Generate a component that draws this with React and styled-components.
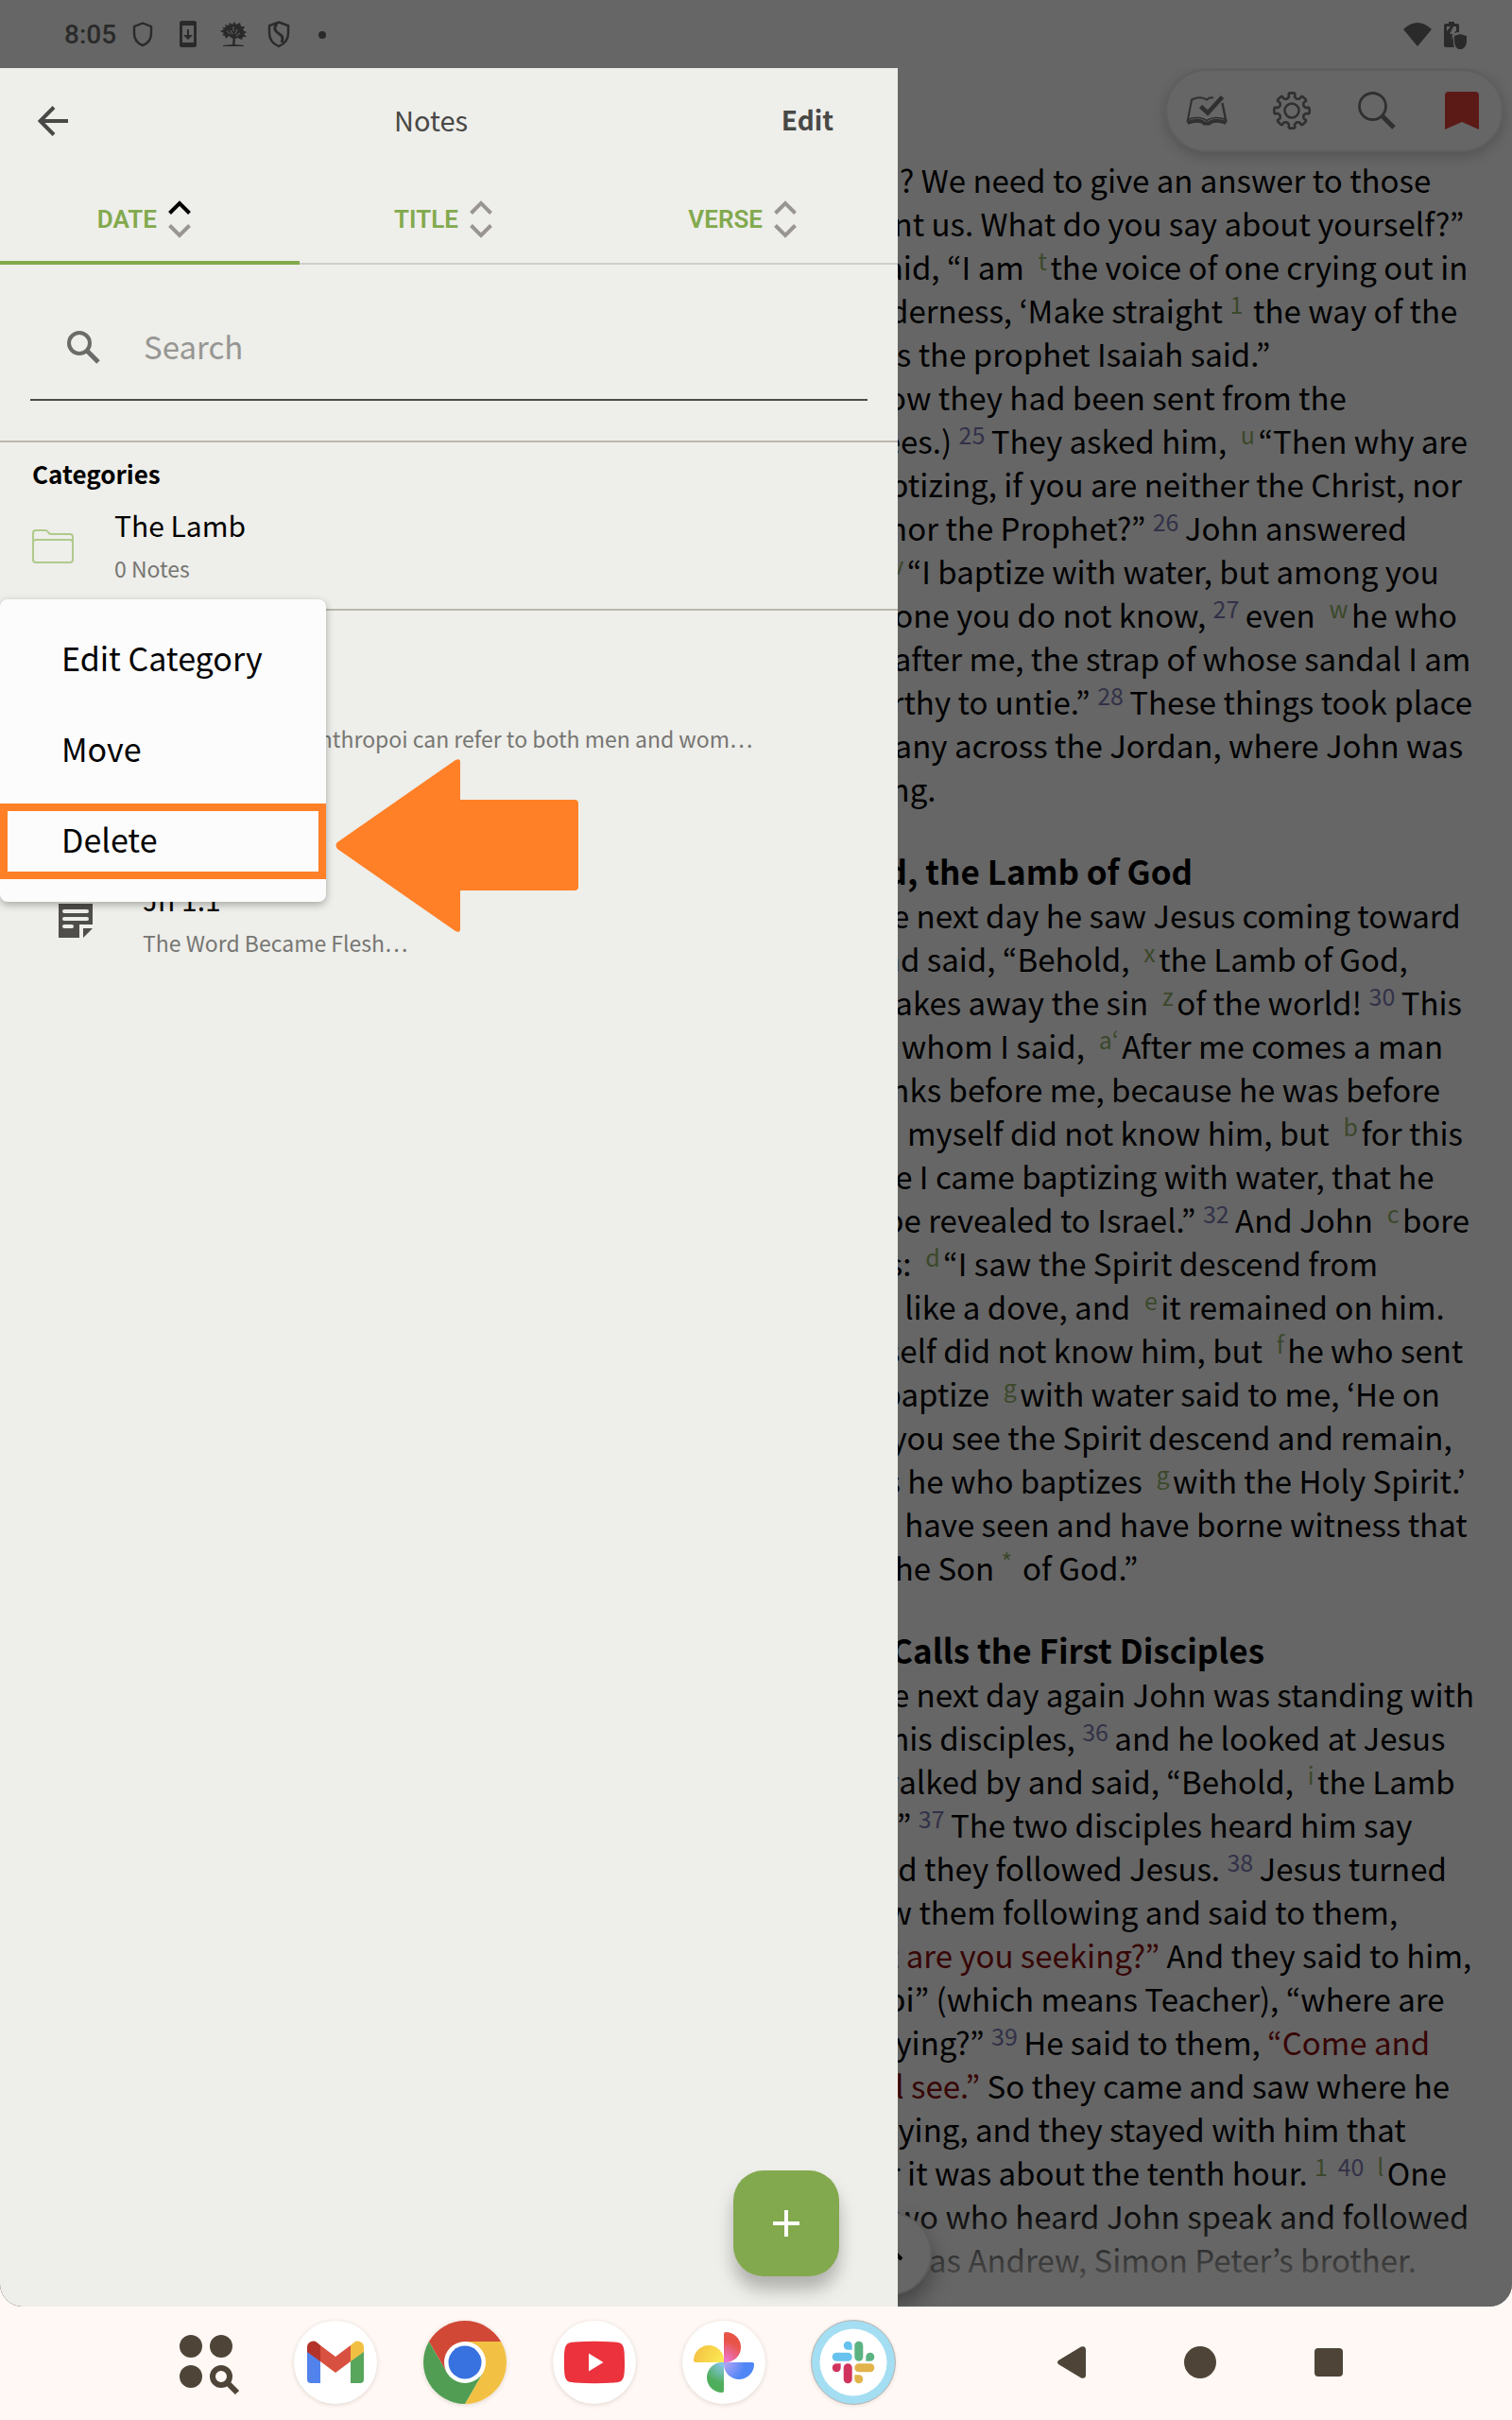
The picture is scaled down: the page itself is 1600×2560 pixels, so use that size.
import React from 'react'
import styled, { createGlobalStyle, css } from 'styled-components'

const GlobalStyle = createGlobalStyle`
*{
  box-sizing:border-box;
}
body{
  margin:0;
  background-color:#fff8f4;
  font-family:"Noto Sans CJK KR","Noto Sans",sans-serif;
}
button,input{
  font-family:inherit;
  border:none;
  background:none;
  padding:0;
  margin:0;
}
button{
  cursor:pointer;
}
h1,h2,p,ul{
  margin:0;
  padding:0;
}
ul{
  list-style:none;
}
svg{
  display:block;
}
`

const Page = styled.div`
  min-height:100vh;
  display:flex;
  flex-direction:column;
`

/* status bar */
const StatusBar = styled.header`
  height:72px;
  padding:0 46px 0 68px;
  display:flex;
  align-items:center;
  justify-content:space-between;
  background-color:#666;
  color:#2a2a2a;
`
const StatusGroup = styled.div`
  display:flex;
  align-items:center;
  gap:12px;
`
const StatusIcons = styled.div`
  display:flex;
  align-items:center;
  gap:${props => props.$gap}px;
`
const Time = styled.span`
  font-family:Roboto,sans-serif;
  font-size:28px;
  font-weight:500;
`

/* main area */
const Main = styled.main`
  flex:1;
  position:relative;
  display:flex;
  border-radius:0 0 24px 24px;
  overflow:hidden;
  background-color:#666;
`

/* reader */
const Reader = styled.section`
  flex:1;
  display:flex;
  flex-direction:column;
  color:#000;
`
const Toolbar = styled.nav`
  align-self:flex-end;
  margin:1px 9px 6px 0;
  height:88px;
  padding:0 20px;
  display:flex;
  align-items:center;
  gap:46px;
  border:2px solid #5e5e5e;
  border-radius:44px;
  box-shadow:0 4px 14px rgba(0,0,0,0.2);
`
const ToolButton = styled.button`
  width:44px;
  height:44px;
  display:flex;
  align-items:center;
  justify-content:center;
`
const Spread = styled.div`
  display:grid;
  grid-template-columns:1fr 1fr;
  column-gap:92px;
  padding:0 40px;
`
const Column = styled.article`
  grid-column:2;
  font-size:33px;
  line-height:46px;
  white-space:nowrap;
`
const Heading = styled.h2`
  margin-top:40px;
  font-size:35px;
  line-height:48px;
  font-weight:700;
`
const Line = styled.span`
  display:block;
  padding-left:${props => (props.$indent ? '32px' : '0')};
`
const Mark = styled.sup`
  font-size:25px;
  line-height:0;
  vertical-align:10px;
  color:#3b482a;
  margin-right:-4px;
  ${props => props.$verse && css`
    color:#323148;
    margin-right:-1px;
  `}
`
const Red = styled.span`
  color:#370505;
`
const Fade = styled.div`
  position:absolute;
  left:0;
  right:0;
  bottom:0;
  height:110px;
  background:linear-gradient(rgba(102,102,102,0),#666);
`
const NextButton = styled.button`
  position:absolute;
  right:614px;
  bottom:12px;
  width:88px;
  height:88px;
  display:flex;
  align-items:center;
  justify-content:center;
  border:2px solid #5e5e5e;
  border-radius:50%;
  background-color:#666;
  box-shadow:0 12px 24px rgba(0,0,0,0.35);
`

/* drawer */
const Overlay = styled.div`
  position:absolute;
  inset:0;
  display:flex;
  pointer-events:none;
`
const Drawer = styled.aside`
  flex:19;
  min-width:0;
  display:flex;
  flex-direction:column;
  background-color:#eeeeea;
  pointer-events:auto;
`
const Rest = styled.div`
  flex:13;
`
const DrawerHeader = styled.div`
  height:112px;
  display:grid;
  grid-template-columns:112px 1fr 150px;
  align-items:center;
  color:#484846;
`
const BackButton = styled.button`
  padding-left:40px;
  color:inherit;
`
const Title = styled.h1`
  padding-bottom:4px;
  text-align:center;
  font-size:29px;
  font-weight:400;
`
const EditButton = styled.button`
  padding:0 68px 4px 0;
  text-align:right;
  font-size:28px;
  font-weight:700;
  color:inherit;
`
const Tabs = styled.div`
  height:96px;
  display:grid;
  grid-template-columns:repeat(3,1fr);
`
const Tab = styled.button`
  padding-right:4px;
  display:flex;
  align-items:center;
  justify-content:center;
  gap:4px;
  font-family:Roboto,sans-serif;
  font-size:26px;
  font-weight:600;
  color:#82a94d;
  box-shadow:inset 0 ${props => (props.$active ? '-4px 0 #82a94d' : '-2px 0 #cfcfcb')};
`
const SearchBox = styled.label`
  height:144px;
  margin:0 32px 42px;
  padding:32px 38px 0;
  display:flex;
  align-items:center;
  gap:46px;
  border-bottom:2px solid #4a4a46;
  color:#6b6b69;
`
const SearchInput = styled.input`
  flex:1;
  min-width:0;
  height:64px;
  padding-bottom:3px;
  font-size:33px;
  color:#484846;
  outline:none;
  &::placeholder{
    color:#969693;
    opacity:1;
  }
`
const Categories = styled.section`
  position:relative;
  height:180px;
  padding:13px 34px 0;
  border-top:2px solid #b9b7ad;
  border-bottom:2px solid #b9b7ad;
`
const SectionTitle = styled.h2`
  font-size:26px;
  line-height:40px;
  font-weight:700;
`
const CategoryRow = styled.div`
  margin-top:11px;
  display:flex;
  align-items:center;
  gap:43px;
`
const RowText = styled.div`
  min-width:0;
  white-space:nowrap;
`
const RowTitle = styled.p`
  font-size:30px;
  line-height:46px;
  color:#000;
`
const RowSub = styled.p`
  font-size:23px;
  line-height:46px;
  color:#767673;
`
const NoteList = styled.ul`
  padding:58px 62px 0;
`
const NoteRow = styled.li`
  height:108px;
  display:flex;
  align-items:center;
  gap:53px;
`
const NoteText = styled(RowText)`
  height:92px;
  display:flex;
  flex-direction:column;
  justify-content:flex-end;
`
const Menu = styled.ul`
  position:absolute;
  left:0;
  top:calc(100% - 10px);
  min-width:345px;
  padding:16px 0;
  border-radius:8px;
  background-color:#fcfcfc;
  box-shadow:0 3px 8px rgba(0,0,0,0.3);
`
const MenuItem = styled.li`
  position:relative;
  padding:8px 0;
`
const MenuButton = styled.button`
  width:100%;
  height:80px;
  padding:0 57px 4px;
  border:8px solid transparent;
  text-align:left;
  font-size:34px;
  line-height:48px;
  color:#000;
  ${props => props.$marked && css`
    border-color:#ff8027;
  `}
`
const Pointer = styled.svg`
  position:absolute;
  left:calc(100% + 10px);
  top:-39px;
`
const AddButton = styled.button`
  width:112px;
  height:112px;
  margin:auto 62px 32px auto;
  display:flex;
  align-items:center;
  justify-content:center;
  border-radius:32px;
  background-color:#83a94e;
  box-shadow:0 14px 18px rgba(0,0,0,0.26);
`

/* bottom bar */
const NavBar = styled.footer`
  height:120px;
  padding:0 150px 2px 174px;
  display:flex;
  align-items:center;
  justify-content:space-between;
  color:#4e4438;
`
const NavGroup = styled.div`
  display:flex;
  gap:${props => props.$gap}px;
`
const NavButton = styled.button`
  width:88px;
  height:88px;
  display:flex;
  align-items:center;
  justify-content:center;
  color:inherit;
`
const AppButton = styled(NavButton)`
  border-radius:50%;
  background-color:#fff;
  box-shadow:0 1px 5px rgba(60,40,20,0.16);
`

const gearPath = () => {
  const points = []
  for (let i = 0; i < 8; i++) {
    const a = (i * Math.PI) / 4
    const steps = [[-0.34, 13.6], [-0.2, 15], [-0.19, 18], [-0.13, 18.8], [0.13, 18.8], [0.19, 18], [0.2, 15], [0.34, 13.6]]
    steps.forEach(([d, r]) => {
      points.push((20 + r * Math.sin(a + d)).toFixed(2) + ' ' + (20 - r * Math.cos(a + d)).toFixed(2))
    })
  }
  return 'M' + points.join('L') + 'Z'
}

const SortIcon = ({ up }) => (
  <svg width="40" height="48" viewBox="0 0 40 48" fill="none" strokeWidth="4">
    <path d="M9.500 17.500L20 7L30.500 17.500" stroke={up ? '#000' : '#999592'} />
    <path d="M9.500 30.500L20 41L30.500 30.500" stroke="#999592" />
  </svg>
)

const NoteIcon = () => (
  <svg width="36" height="36" viewBox="0 0 36 36">
    <path fill="#4f4e4a" d="M0 0H36V22H22V36H0ZM26 26H36L26 36Z" />
    <path stroke="#eeeeea" strokeWidth="4" strokeLinecap="round" d="M6 8H30M6 16H30M6 24H14" />
  </svg>
)

const tabs = ['DATE', 'TITLE', 'VERSE']

const notes = [
  { id: 3, text: 'The Greek word anthropoi can refer to both men and wom…' },
  { id: 2 },
  { id: 1, title: 'Jn 1:1', text: 'The Word Became Flesh…' },
]

const menu = ['Edit Category', 'Move', 'Delete']

// v = verse number, n = footnote or cross reference, r = words in red
const v = t => ({ kind: 'v', t })
const n = t => ({ kind: 'n', t })
const r = t => ({ kind: 'r', t })

const sections = [
  {
    lines: [
      ['are you? We need to give an answer to those'],
      ['who sent us. What do you say about yourself?”'],
      [v('23'), ' He said, “I am  ', n('t'), ' the voice of one crying out in'],
      ['the wilderness, ‘Make straight ', n('1'), '  the way of the'],
      ['Lord,’ as the prophet Isaiah said.”'],
    ],
  },
  {
    indent: true,
    lines: [
      [v('24'), ' (Now they had been sent from the'],
      ['Pharisees.) ', v('25'), ' They asked him,  ', n('u'), ' “Then why are'],
      ['you baptizing, if you are neither the Christ, nor'],
      ['Elijah, nor the Prophet?” ', v('26'), ' John answered'],
      ['them,  ', n('v'), ' “I baptize with water, but among you'],
      ['stands one you do not know, ', v('27'), ' even  ', n('w'), ' he who'],
      ['comes after me, the strap of whose sandal I am'],
      ['not worthy to untie.” ', v('28'), ' These things took place'],
      ['in Bethany across the Jordan, where John was'],
      ['baptizing.'],
    ],
  },
  {
    heading: 'Behold, the Lamb of God',
    indent: true,
    lines: [
      [v('29'), ' The next day he saw Jesus coming toward'],
      ['him, and said, “Behold,  ', n('x'), ' the Lamb of God,'],
      ['who  ', n('y'), ' takes away the sin  ', n('z'), ' of the world! ', v('30'), ' This'],
      ['is he of whom I said,  ', n('a‘'), ' After me comes a man'],
      ['who ranks before me, because he was before'],
      ['me.’ ', v('31'), ' I myself did not know him, but  ', n('b'), ' for this'],
      ['purpose I came baptizing with water, that he'],
      ['might be revealed to Israel.” ', v('32'), ' And John  ', n('c'), ' bore'],
      ['witness:  ', n('d'), ' “I saw the Spirit descend from'],
      ['heaven like a dove, and  ', n('e'), ' it remained on him.'],
      [v('33'), ' I myself did not know him, but  ', n('f'), ' he who sent'],
      ['me to baptize  ', n('g'), ' with water said to me, ‘He on'],
      ['whom you see the Spirit descend and remain,'],
      ['\u00a0', n('h'), ' this is he who baptizes  ', n('g'), ' with the Holy Spirit.’'],
      [v('34'), ' And I have seen and have borne witness that'],
      ['this is the Son ', n('*'), '  of God.”'],
    ],
  },
  {
    heading: 'Jesus Calls the First Disciples',
    indent: true,
    lines: [
      [v('35'), ' The next day again John was standing with'],
      ['two of his disciples, ', v('36'), ' and he looked at Jesus'],
      ['as he walked by and said, “Behold,  ', n('i'), ' the Lamb'],
      ['of God!” ', v('37'), ' The two disciples heard him say'],
      ['this, and they followed Jesus. ', v('38'), ' Jesus turned'],
      ['and saw them following and said to them,'],
      ['\u00a0', n('j'), ' ', r('“What are you seeking?”'), ' And they said to him,'],
      ['\u00a0', n('k'), ' “Rabbi” (which means Teacher), “where are'],
      ['you staying?” ', v('39'), ' He said to them, ', r('“Come and')],
      [r('you will see.”'), ' So they came and saw where he'],
      ['was staying, and they stayed with him that'],
      ['day, for it was about the tenth hour. ', n('1'), '  ', v('40'), '  ', n('l'), ' One'],
      ['of the two who heard John speak and followed'],
      ['Jesus ', n('2'), '  was Andrew, Simon Peter’s brother.'],
    ],
  },
]

// double spaces in the verse text have to stay
const keep = t => t.replace(/ {2}/g, '\u00a0 ')

const Piece = ({ piece }) => {
  if (typeof piece === 'string') return keep(piece)
  if (piece.kind === 'r') return <Red>{piece.t}</Red>
  return <Mark $verse={piece.kind === 'v'}>{piece.t}</Mark>
}

const Status = () => (
  <StatusBar>
    <StatusGroup>
      <Time>8:05</Time>
      <StatusIcons $gap={16}>
        <svg width="32" height="32" viewBox="0 0 32 32" fill="none" stroke="currentColor" strokeWidth="2.400">
          <path d="M16 4.500L25 8V15C25 21 21.500 26 16 28C10.500 26 7 21 7 15V8Z" strokeLinejoin="round" />
        </svg>
        <svg width="32" height="32" viewBox="0 0 32 32">
          <path fill="currentColor" fillRule="evenodd" d="M9.500 2H22.500Q25 2 25 4.500V27.500Q25 30 22.500 30H9.500Q7 30 7 27.500V4.500Q7 2 9.500 2ZM10 7V25H22V7Z" />
          <path fill="currentColor" d="M15 11H17V17H21L16 22L11 17H15Z" />
        </svg>
        <svg width="32" height="32" viewBox="0 0 32 32" fill="currentColor">
          <path d="M15 27L15.500 21L11 18L8 21L7 18L4 17L6 15L2 13L6 11L4 9L8 9L7 6L11 7L12 4L15 6L17 3L19 6L23 4L24 8L28 8L26 12L30 14L27 16L30 19L26 19L25 22L20 20L18 21L17.500 27L27 28V29H5V28Z" />
          <path d="M13 12L15 16M20 11L18 16M9 13L13 16M23 15L19 18M16 8V13" stroke="#666" strokeWidth="1" />
        </svg>
        <svg width="32" height="32" viewBox="0 0 32 32" fill="none" stroke="currentColor" strokeWidth="2.400">
          <path d="M16 3.500L26 7V15C26 22 22 26.500 16 29C10 26.500 6 22 6 15V7Z" />
          <path d="M14 5C10 10 12 13 16 15.500C20 18 21 20 19 25" strokeWidth="3" />
        </svg>
        <svg width="32" height="32" viewBox="0 0 32 32">
          <circle cx="14" cy="17" r="4" fill="currentColor" />
        </svg>
      </StatusIcons>
    </StatusGroup>
    <StatusIcons $gap={10}>
      <svg width="32" height="32" viewBox="0 0 32 32">
        <path fill="currentColor" d="M1 11Q16 -3 31 11L16 29Z" />
      </svg>
      <svg width="28" height="32" viewBox="0 0 28 32">
        <path fill="currentColor" fillRule="evenodd" d="M7 4V3H13V5H16Q18 5 18 7V14Q12 14 12 18V25Q12 28 13 30H4Q2 30 2 28V7Q2 5 4 5H7ZM5 8V13L9 8ZM15 8H12L8 16H11L10 23L14 13H15Z" />
        <path fill="currentColor" d="M19 16L26 18V24Q26 30 19 33Q13 30 13 24V18Z" />
      </svg>
    </StatusIcons>
  </StatusBar>
)

const ReaderPane = () => (
  <Reader>
    <Toolbar>
      <ToolButton aria-label="Reading plans">
        <svg width="44" height="34" viewBox="0 0 44 34" fill="none" stroke="#303030">
          <path d="M29 3.500C26 3 23.500 4 22 5.500C17.500 2.500 11 3 6 5.500L1.500 29" strokeWidth="2" />
          <path d="M38.500 9L42.500 29" strokeWidth="2.400" />
          <path d="M1.500 30C8 27 16 26.500 19.500 30.500H24.500C28 26.500 36 27 42.500 30" strokeWidth="4" />
          <path d="M2 26.500C9 23.500 17 24 22 27.500C27 24 35 23.500 42 26.500" strokeWidth="1.600" />
          <path d="M15.500 12.500L23 19.500L38.500 2.500" strokeWidth="4.600" />
        </svg>
      </ToolButton>
      <ToolButton aria-label="Settings">
        <svg width="40" height="40" viewBox="0 0 40 40" fill="none" stroke="#303030" strokeLinejoin="round">
          <path d={gearPath()} strokeWidth="2.600" />
          <circle cx="20" cy="20" r="7.500" strokeWidth="2.600" />
        </svg>
      </ToolButton>
      <ToolButton aria-label="Search the text">
        <svg width="40" height="40" viewBox="0 0 40 40" fill="none" stroke="#303030">
          <circle cx="15.500" cy="15.500" r="14" strokeWidth="2.800" />
          <path d="M25 25L38 38" strokeWidth="5" />
        </svg>
      </ToolButton>
      <ToolButton aria-label="Bookmark">
        <svg width="36" height="40" viewBox="0 0 36 40">
          <path d="M4 0H32Q36 0 36 4V40L18 32L0 40V4Q0 0 4 0Z" fill="#5c1a17" />
        </svg>
      </ToolButton>
    </Toolbar>
    <Spread>
      <Column>
        {sections.map((section, i) => (
          <React.Fragment key={i}>
            {section.heading && <Heading>{section.heading}</Heading>}
            <p>
              {section.lines.map((line, j) => (
                <Line key={j} $indent={section.indent && j === 0}>
                  {line.map((piece, k) => <Piece key={k} piece={piece} />)}
                </Line>
              ))}
            </p>
          </React.Fragment>
        ))}
      </Column>
    </Spread>
    <Fade />
    <NextButton aria-label="Show more">
      <svg width="32" height="32" viewBox="0 0 32 32" fill="none" stroke="#000" strokeWidth="4">
        <path d="M4 22L16 10L28 22" />
      </svg>
    </NextButton>
  </Reader>
)

const NotesDrawer = () => (
  <Drawer>
    <DrawerHeader>
      <BackButton aria-label="Back">
        <svg width="32" height="32" viewBox="0 0 32 32" fill="none" stroke="currentColor" strokeWidth="4">
          <path d="M17 1.500L2.500 16L17 30.500M2.500 16H32" />
        </svg>
      </BackButton>
      <Title>Notes</Title>
      <EditButton>Edit</EditButton>
    </DrawerHeader>
    <Tabs>
      {tabs.map((tab, i) => (
        <Tab key={tab} $active={i === 0}>
          {tab}
          <SortIcon up={i === 0} />
        </Tab>
      ))}
    </Tabs>
    <SearchBox>
      <svg width="36" height="36" viewBox="0 0 36 36" fill="none" stroke="currentColor" strokeWidth="4">
        <circle cx="14" cy="14" r="11" />
        <path d="M22 22L34 34" strokeWidth="5" />
      </svg>
      <SearchInput type="text" placeholder="Search" aria-label="Search" />
    </SearchBox>
    <Categories>
      <SectionTitle>Categories</SectionTitle>
      <CategoryRow>
        <svg width="44" height="36" viewBox="0 0 44 36" fill="none" stroke="#b0ca8c" strokeWidth="2">
          <path d="M1 15V4Q1 1 4 1H14Q16 1 17 3Q18 5 20 5H40Q43 5 43 8V15" />
          <path d="M1 32V14Q1 11 4 11H40Q43 11 43 14V32Q43 35 40 35H4Q1 35 1 32Z" />
        </svg>
        <RowText>
          <RowTitle>The Lamb</RowTitle>
          <RowSub>0 Notes</RowSub>
        </RowText>
      </CategoryRow>
      <Menu>
        {menu.map(item => (
          <MenuItem key={item}>
            <MenuButton $marked={item === 'Delete'}>{item}</MenuButton>
            {item === 'Delete' && (
              <Pointer width="257" height="183" viewBox="0 0 257 183" aria-hidden="true">
                <path d="M2 88L127 1Q132 -1 132 3V43H253Q257 43 257 47V135Q257 139 253 139H132V180Q132 184 127 182L2 95Q-1 91 2 88Z" fill="#ff8027" />
              </Pointer>
            )}
          </MenuItem>
        ))}
      </Menu>
    </Categories>
    <NoteList>
      {notes.map(note => (
        <NoteRow key={note.id}>
          <NoteIcon />
          <NoteText>
            {note.title && <RowTitle>{note.title}</RowTitle>}
            {note.text && <RowSub>{note.text}</RowSub>}
          </NoteText>
        </NoteRow>
      ))}
    </NoteList>
    <AddButton aria-label="Add note">
      <svg width="28" height="28" viewBox="0 0 28 28" stroke="#fff" strokeWidth="4">
        <path d="M14 0V28M0 14H28" />
      </svg>
    </AddButton>
  </Drawer>
)

const BottomBar = () => (
  <NavBar>
    <NavGroup $gap={49}>
      <NavButton aria-label="All apps">
        <svg width="88" height="88" viewBox="-44 -44 88 88" fill="currentColor">
          <circle cx="-16" cy="-17" r="12" />
          <circle cx="16" cy="-17" r="12" />
          <circle cx="-16" cy="15" r="12" />
          <g fill="none" stroke="currentColor" strokeWidth="6">
            <circle cx="16" cy="15" r="9" />
            <path d="M22 21L33 32" />
          </g>
        </svg>
      </NavButton>
      <AppButton aria-label="Gmail">
        <svg width="88" height="88" viewBox="-44 -44 88 88">
          <path d="M-30 -12L-16 -2V22H-26Q-30 22 -30 18Z" fill="#5283ec" />
          <path d="M30 -12L16 -2V22H26Q30 22 30 18Z" fill="#58a55c" />
          <path d="M-16 -18L0 -6L16 -18V-1L0 11L-16 -1Z" fill="#d8503f" />
          <path d="M-30 -11V-16A6.500 6.500 0 0 1 -19.500 -21L-16 -18V-1Z" fill="#b3332a" />
          <path d="M30 -11V-16A6.500 6.500 0 0 0 19.500 -21L16 -18V-1Z" fill="#f1bf42" />
        </svg>
      </AppButton>
      <AppButton aria-label="Chrome">
        <svg width="88" height="88" viewBox="-44 -44 88 88">
          <path d="M-38.100 -22A44 44 0 0 1 38.100 -22H0L-19 11Z" fill="#d14836" />
          <path d="M38.100 -22A44 44 0 0 1 0 44L19 11L0 -22Z" fill="#f2c144" />
          <path d="M0 44A44 44 0 0 1 -38.100 -22L-19 11H19Z" fill="#509d53" />
          <circle r="22" fill="#fff" />
          <circle r="17.500" fill="#3871e0" />
        </svg>
      </AppButton>
      <AppButton aria-label="YouTube">
        <svg width="88" height="88" viewBox="-44 -44 88 88">
          <path d="M-32 0C-32 -18 -31 -21 -21 -21.500Q0 -23 21 -21.500C31 -21 32 -18 32 0C32 18 31 21 21 21.500Q0 23 -21 21.500C-31 21 -32 18 -32 0Z" fill="#eb323d" />
          <path d="M-6 -9.500L9.500 0L-6 9.500Z" fill="#fff" />
        </svg>
      </AppButton>
      <AppButton aria-label="Photos">
        <svg width="88" height="88" viewBox="-44 -44 88 88">
          <defs>
            <radialGradient id="photosRed" gradientUnits="userSpaceOnUse" cx="0" cy="0" r="32">
              <stop offset="0.100" stopColor="#ee74d0" />
              <stop offset="0.700" stopColor="#e85548" />
            </radialGradient>
            <radialGradient id="photosBlue" gradientUnits="userSpaceOnUse" cx="0" cy="0" r="32">
              <stop offset="0.100" stopColor="#a9a2f5" />
              <stop offset="0.700" stopColor="#4f86f7" />
            </radialGradient>
            <radialGradient id="photosGreen" gradientUnits="userSpaceOnUse" cx="0" cy="0" r="32">
              <stop offset="0.100" stopColor="#86c5e6" />
              <stop offset="0.700" stopColor="#4fae5b" />
            </radialGradient>
            <radialGradient id="photosYellow" gradientUnits="userSpaceOnUse" cx="0" cy="0" r="32">
              <stop offset="0.100" stopColor="#fbe952" />
              <stop offset="1" stopColor="#f5c444" />
            </radialGradient>
          </defs>
          <path d="M0 0V-30Q0 -32 2 -32A16 16 0 0 1 2 0Z" fill="url(#photosRed)" />
          <path d="M0 0H30Q32 0 32 2A16 16 0 0 1 0 2Z" fill="url(#photosBlue)" />
          <path d="M0 0V30Q0 32 -2 32A16 16 0 0 1 -2 0Z" fill="url(#photosGreen)" />
          <path d="M0 0H-30Q-32 0 -32 -2A16 16 0 0 1 0 -2Z" fill="url(#photosYellow)" />
        </svg>
      </AppButton>
      <AppButton aria-label="Slack">
        <svg width="88" height="88" viewBox="-44 -44 88 88" overflow="visible">
          <circle r="44.500" fill="#a4def2" stroke="#b9b4b2" strokeWidth="1" />
          <circle r="35.500" fill="#fff" />
          {['#67c2ee', '#5cb382', '#e2b34b', '#d0345d'].map((color, i) => (
            <g key={color} fill={color} transform={`rotate(${i * 90})`}>
              <rect x="-22.300" y="-10.300" width="21" height="9" rx="4.500" />
              <path d="M-1.300 -13.300H-5.800A4.500 4.500 0 1 1 -1.300 -17.800Z" />
            </g>
          ))}
        </svg>
      </AppButton>
    </NavGroup>
    <NavGroup $gap={48}>
      <NavButton aria-label="Go back">
        <svg width="30" height="34" viewBox="0 0 30 34" fill="currentColor">
          <path d="M1 15L25 0.500Q30 -1 30 4V30Q30 35 25 33.500L1 19Q-1 17 1 15Z" />
        </svg>
      </NavButton>
      <NavButton aria-label="Home">
        <svg width="34" height="34" viewBox="0 0 34 34" fill="currentColor">
          <circle cx="17" cy="17" r="17" />
        </svg>
      </NavButton>
      <NavButton aria-label="Recent apps">
        <svg width="30" height="30" viewBox="0 0 30 30" fill="currentColor">
          <rect width="30" height="30" rx="4" />
        </svg>
      </NavButton>
    </NavGroup>
  </NavBar>
)

const App = () => {
  return (
    <Page>
      <GlobalStyle />
      <Status />
      <Main>
        <ReaderPane />
        <Overlay>
          <NotesDrawer />
          <Rest />
        </Overlay>
      </Main>
      <BottomBar />
    </Page>
  )
}

export default App
